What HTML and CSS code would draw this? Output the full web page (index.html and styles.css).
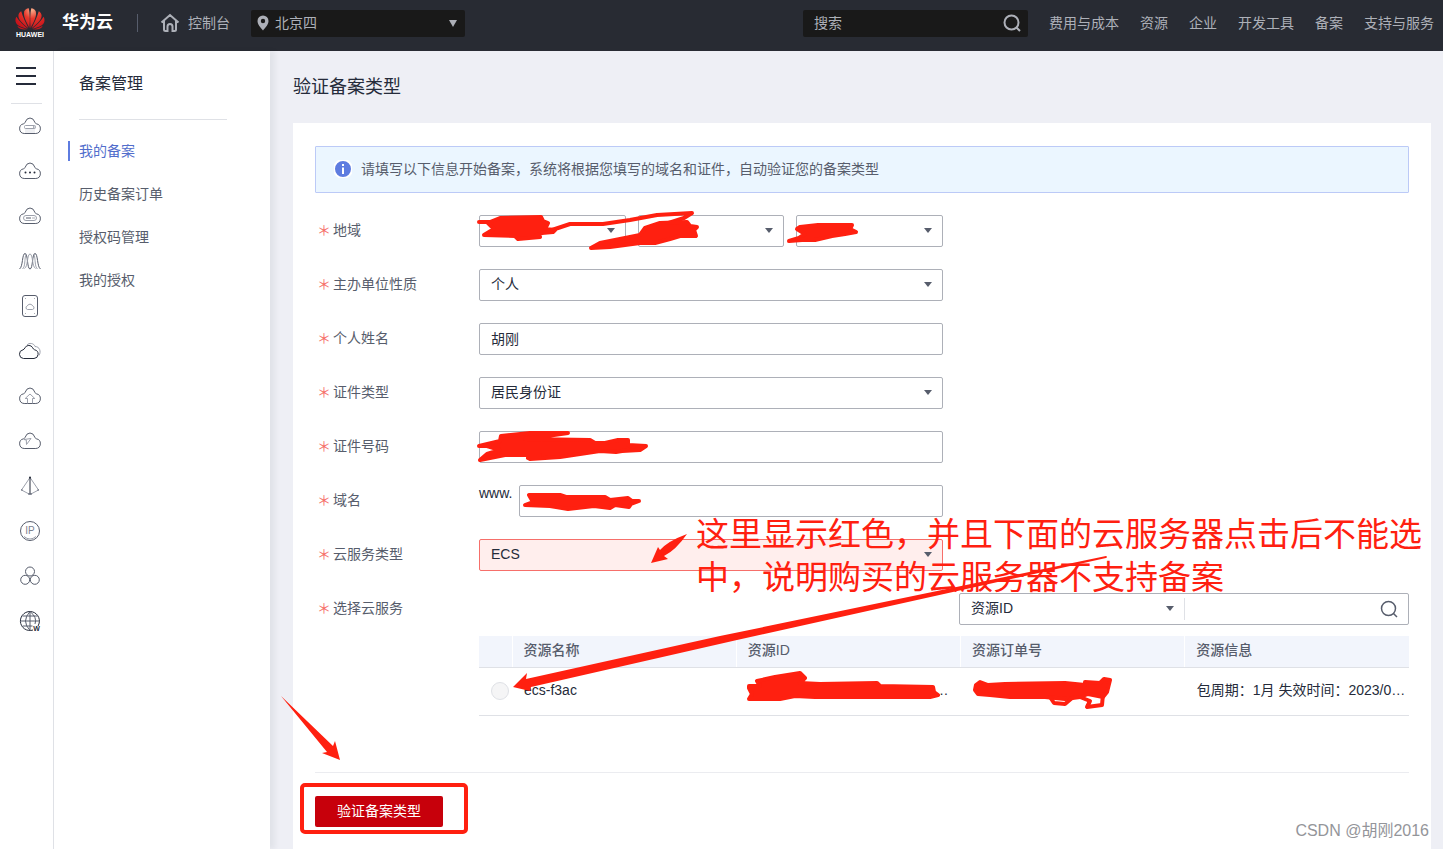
FILE: index.html
```html
<!DOCTYPE html>
<html lang="zh-CN">
<head>
<meta charset="utf-8">
<title>验证备案类型</title>
<link rel="stylesheet" href="styles.css">
</head>
<body>
<svg class="defs" aria-hidden="true">
  <symbol id="cloud" viewBox="0 0 24 24"><path d="M6.200 19.500A4.900 4.900 0 0 1 5.600 9.800Q6.500 9.600 7 8.500Q8.500 4 12 4T17 8.500Q17.500 9.600 18.400 9.800A4.900 4.900 0 0 1 17.800 19.500Z"/></symbol>
  <symbol id="search" viewBox="0 0 20 20"><circle cx="9.5" cy="9.5" r="7"/><path d="M14.500 14.500L18 18"/></symbol>
</svg>

<header class="topbar">
  <a class="logo" href="#" aria-label="HUAWEI">
    <svg class="logo-mark" viewBox="0 0 30 22">
      <defs><radialGradient id="petal" gradientUnits="userSpaceOnUse" cx="17" cy="2" r="19"><stop offset="0" stop-color="#f8b08c"/><stop offset=".45" stop-color="#e8382c"/><stop offset="1" stop-color="#c9141b"/></radialGradient></defs>
      <g fill="url(#petal)">
        <path d="M14.4 20C10.6 13 8.2 8 9.2 3.6C9.8 1.6 11.6.4 13.8.2C15 6 15 13 14.4 20Z"/>
        <path d="M15.6 20C19.4 13 21.8 8 20.8 3.6C20.2 1.6 18.4.4 16.2.2C15 6 15 13 15.6 20Z"/>
        <path d="M13.5 20.3C7 15.5 3.3 11.5 3.4 7.6C3.5 5.7 4.6 4 6.2 3.2C8 9.500 10.600 14.500 13.500 20.300Z"/>
        <path d="M16.5 20.3C23 15.500 26.700 11.500 26.600 7.600C26.500 5.700 25.400 4 23.800 3.200C22 9.500 19.400 14.500 16.500 20.300Z"/>
        <path d="M12.800 20.800C5.800 19 1.200 17 .6 13.400C.3 11.400.7 10 1.400 8.800C4.500 13.600 8.400 17.300 12.800 20.800Z"/>
        <path d="M17.200 20.800C24.200 19 28.800 17 29.400 13.400C29.700 11.400 29.300 10 28.600 8.800C25.500 13.600 21.600 17.300 17.200 20.800Z"/>
        <path d="M12.300 21.300C8 21.600 4.200 21.700 2.200 17.700C5.500 19.500 8.500 20.600 12.300 21.300Z"/>
        <path d="M17.700 21.300C22 21.600 25.800 21.700 27.800 17.700C24.500 19.500 21.500 20.600 17.700 21.300Z"/>
      </g>
    </svg>
    <span class="logo-text">HUAWEI</span>
  </a>
  <strong class="brand">华为云</strong>
  <a class="console" href="#">
    <svg class="home" viewBox="0 0 20 20"><path d="M1.500 9.500L10 2l8.500 7.500M4 7.500V16.500q0 1.500 1.500 1.500h2V13.500a2.500 2.500 0 0 1 5 0V18h2q1.500 0 1.500-1.500V7.500"/></svg>
    控制台
  </a>
  <div class="region select">
    <svg class="pin" viewBox="0 0 12 16"><path fill-rule="evenodd" d="M6 .5a5.500 5.500 0 0 1 5.500 5.500c0 3.500-3 6.500-5.500 9.500C3.500 12.500.5 9.500.5 6a5.500 5.500 0 0 1 5.500-5.500zm0 3.300a2.200 2.200 0 1 0 0 4.400a2.200 2.200 0 0 0 0-4.400z"/></svg>
    <select aria-label="区域"><option>北京四</option></select>
  </div>
  <div class="top-search">
    <input type="text" placeholder="搜索" aria-label="搜索">
    <button type="button" aria-label="搜索"><svg class="icon-search"><use href="#search"/></svg></button>
  </div>
  <nav class="top-nav">
    <a href="#">费用与成本</a><a href="#">资源</a><a href="#">企业</a><a href="#">开发工具</a><a href="#">备案</a><a href="#">支持与服务</a>
  </nav>
</header>

<div class="layout">
  <nav class="rail" aria-label="服务">
    <button class="menu" type="button" aria-label="菜单"><i></i><i></i><i></i></button>
    <div class="rail-icons">
      <a href="#" aria-label="弹性云服务器"><svg viewBox="0 0 24 24"><path class="shade" d="M7 14h10v5H7z"/><use href="#cloud"/><g class="faint"><rect x="6.500" y="11.500" width="11" height="3" rx="1"/><path class="dark" d="M15 13h1.500"/></g></svg></a>
      <a href="#" aria-label="云服务"><svg viewBox="0 0 24 24"><use href="#cloud"/><path class="dots" d="M7.500 13.500h0M12 13.500h0M16.500 13.500h0"/></svg></a>
      <a href="#" aria-label="云硬盘"><svg viewBox="0 0 24 24"><use href="#cloud"/><g class="faint"><rect x="5.500" y="11.500" width="13" height="5" rx="2.500"/><path class="dark" d="M8 14h5M14.500 14h1M16.500 14h.5"/></g></svg></a>
      <a href="#" aria-label="弹性伸缩"><svg viewBox="0 0 24 24"><path d="M1.500 20C5 18 4 4.500 7 4.500S9 20 12 20S14 4.500 17 4.500S19 18 22.500 20"/><path class="faint" d="M4.500 20C8 18 6 4.500 9 5.500M6.500 19.500C10 18 9 5 12 5S14 18 17.500 19.500M15 5.500C18 4.500 16 18 19.500 20"/></svg></a>
      <a href="#" aria-label="云存储"><svg viewBox="0 0 24 24"><rect x="4.500" y="1.500" width="15" height="21" rx="2.500"/><path d="M7 4.500h.5M16.500 4.500h.5M7 19.500h.5M16.500 19.500h.5"/><path class="faint" d="M9.500 15.500a1.800 1.800 0 0 1-.2-3.500a2.900 2.900 0 0 1 5.400 0a1.800 1.800 0 0 1-.2 3.500z"/></svg></a>
      <a href="#" aria-label="多云"><svg viewBox="0 0 24 24"><path class="faint" d="M9 6C11 3.500 16 4 17 7.500C21.500 7.500 23.500 12.500 21 16.500"/><path class="strong" d="M5.500 19.500A4.400 4.400 0 0 1 5 10.800Q6.300 10.300 7 8.800A4.300 4.300 0 0 1 14.700 8.800Q15.300 10.300 16.600 10.800A4.400 4.400 0 0 1 16 19.500Z"/></svg></a>
      <a href="#" aria-label="云备份"><svg viewBox="0 0 24 24"><use href="#cloud"/><path class="faint" d="M9.500 19.500V14.500H7.200L12 10L16.800 14.500H14.500V19.500"/></svg></a>
      <a href="#" aria-label="云加速"><svg viewBox="0 0 24 24"><use href="#cloud"/><path class="faint" d="M6 10.500L13 9.500L8.500 15.500L8.300 11Z"/></svg></a>
      <a href="#" aria-label="数据"><svg viewBox="0 0 24 24"><path class="faint" d="M12 3.500L3.500 16L12 20.500L20.500 16Z"/><path class="strong" d="M12 3v17"/><path class="dots" d="M12 3.500h0"/><path d="M3 16h1.500M19.500 16H21M10 20h4"/></svg></a>
      <a href="#" aria-label="弹性公网IP"><svg viewBox="0 0 24 24"><circle cx="12" cy="12" r="9.500"/><path class="faint" d="M6 17.500Q12 22.500 18 17.500"/><text x="12" y="15">IP</text></svg></a>
      <a href="#" aria-label="容器"><svg viewBox="0 0 24 24"><circle cx="12" cy="7.500" r="4.500"/><circle cx="7.200" cy="15.800" r="4.500"/><circle cx="16.800" cy="15.800" r="4.500"/></svg></a>
      <a href="#" aria-label="域名"><svg viewBox="0 0 24 24"><path class="strong" d="M20 17A9.500 9.500 0 1 0 15 21"/><path d="M12 2.500v19M2.500 12h19M4.500 7h15M4.500 17h10M12 2.500Q3 12 12 21.500M12 2.500Q19.500 8.500 17 15"/><text class="w" x="18.500" y="22">W</text></svg></a>
    </div>
  </nav>

  <aside class="side">
    <h2>备案管理</h2>
    <a class="active" href="#">我的备案</a>
    <a href="#">历史备案订单</a>
    <a href="#">授权码管理</a>
    <a href="#">我的授权</a>
  </aside>

  <main class="main">
    <h1>验证备案类型</h1>
    <form class="panel">
      <div class="alert">
        <svg viewBox="0 0 18 18"><circle cx="9" cy="9" r="9"/><path d="M9 7.500v6.500M9 4v2"/></svg>
        <span>请填写以下信息开始备案，系统将根据您填写的域名和证件，自动验证您的备案类型</span>
      </div>
      <div class="row">
        <label for="province">地域</label>
        <div class="control triple">
          <div class="select"><select id="province"><option></option></select></div>
          <div class="select"><select aria-label="城市"><option></option></select></div>
          <div class="select"><select aria-label="区县"><option></option></select></div>
        </div>
      </div>
      <div class="row">
        <label for="nature">主办单位性质</label>
        <div class="control select"><select id="nature"><option>个人</option></select></div>
      </div>
      <div class="row">
        <label for="name">个人姓名</label>
        <div class="control"><input id="name" type="text" value="胡刚"></div>
      </div>
      <div class="row">
        <label for="id-type">证件类型</label>
        <div class="control select"><select id="id-type"><option>居民身份证</option></select></div>
      </div>
      <div class="row">
        <label for="id-no">证件号码</label>
        <div class="control"><input id="id-no" type="text"></div>
      </div>
      <div class="row">
        <label for="domain">域名</label>
        <div class="control domain"><span>www.</span><input id="domain" type="text"></div>
      </div>
      <div class="row">
        <label for="service">云服务类型</label>
        <div class="control select error"><select id="service"><option>ECS</option></select></div>
      </div>
      <div class="row">
        <label for="filter">选择云服务</label>
        <div class="resources">
          <div class="filter">
            <div class="select"><select id="filter"><option>资源ID</option></select></div>
            <div class="query">
              <input type="text" aria-label="资源搜索">
              <button type="button" aria-label="搜索资源"><svg class="icon-search"><use href="#search"/></svg></button>
            </div>
          </div>
          <table>
            <colgroup><col class="pick"><col><col><col></colgroup>
            <thead><tr><th></th><th>资源名称</th><th>资源ID</th><th>资源订单号</th><th>资源信息</th></tr></thead>
            <tbody><tr><td class="pick-cell"><input type="radio" name="resource" aria-label="ecs-f3ac" disabled></td><td>ecs-f3ac</td><td class="clipped">…</td><td></td><td>包周期：1月 失效时间：2023/0…</td></tr></tbody>
          </table>
        </div>
      </div>
      <div class="actions"><button class="submit" type="button">验证备案类型</button></div>
    </form>
  </main>
</div>

<div class="annotations">
  <svg class="ink" viewBox="0 0 1443 849">
    <g class="scribble">
      <path d="M479 222H490L500 218L541 217L543 221L548 223L545 229L555 230L553 232L542 233L536 235L540 237L518 239L515 236L484 235L494 229L487 222Z"/>
      <path class="line" d="M546 232L570 224H603L630 220L657 215L692 213L684 218L650 229"/>
      <path d="M645 228L660 223L687 222L690 226L697 227L694 230L696 236H680L670 239L655 243H640L610 247L591 248L600 243L640 235Z"/>
      <path d="M789 241L799 238L805 234L797 229L800 227L818 225H852L850 229L856 232L845 234L832 236L815 240H802Z"/>
      <path d="M479 446L500 441L501 436L530 433H568L540 437L525 439L590 440L595 443H605L618 440H628V445L646 446L640 450L622 451L616 452L600 451L580 454L560 457L530 459L528 458L540 455H505L480 460L487 454L500 450L487 446Z"/>
      <path d="M529 495H560L566 497H605L610 500L628 498L632 501H639L631 504L629 507L615 505L610 508L594 506L568 509L550 506L525 505L533 502Z"/>
      <path d="M749 686H760L757 681L775 677L800 673L805 678L800 683L820 684L877 683L880 686L933 687L934 692L938 695L930 697H815L795 696L780 699H749L752 694L749 688Z"/>
      <path d="M975 690L976 685L980 682L988 685L1005 684L1065 683L1085 685V682L1100 683L1104 679L1110 680L1107 692L1103 697L1088 694L1080 697L1065 699L1045 697H1010L990 695L978 694Z"/>
      <path class="line" d="M1050 697L1054 703L1065 704L1072 698M1080 697L1090 701L1087 707L1102 705L1103 694"/>
    </g>
    <path d="M513 687L527 673L526 679L720 636L1106 556Q1108 557 1106 558L737 640L531 687L530 691Z"/>
    <path d="M687 534Q668 541 660 550L658 547L651 563L668 559L664 556Q676 550 687 534Z"/>
    <path d="M281 696L333 746L335 741L340 760L322 753L327 752Z"/>
    <rect class="frame" x="302" y="785" width="164" height="47" rx="3"/>
  </svg>
  <p class="note">这里显示红色，并且下面的云服务器点击后不能选<br>中，说明购买的云服务器不支持备案</p>
  <span class="watermark">CSDN @胡刚2016</span>
</div>
</body>
</html>
```
FILE: styles.css
```css
* { box-sizing: border-box; }
body {
  margin: 0;
  min-height: 100vh;
  display: flex;
  flex-direction: column;
  position: relative;
  background: #eeeff5;
  color: #575d6c;
  font: 14px/20px "Liberation Sans", "Noto Sans CJK SC", sans-serif;
}
a { color: inherit; text-decoration: none; }
button, input, select { font: inherit; color: #252b3a; margin: 0; }
button { border: 0; background: none; padding: 0; }
.defs { position: absolute; width: 0; height: 0; }

/* top bar */
.topbar {
  flex: none;
  display: flex;
  align-items: center;
  height: 51px;
  padding: 0 9px 5px 15px;
  background: #282b33;
  color: #adb0b8;
}
.logo { width: 30px; display: flex; flex-direction: column; align-items: center; padding-top: 2px; }
.logo-mark { width: 30px; height: 22px; }
.logo-text { color: #fff; font-size: 7px; line-height: 10px; font-weight: 700; }
.brand {
  color: #fff;
  font-size: 17px;
  margin-left: 17px;
  padding-right: 24px;
  border-right: 1px solid #575d6c;
  line-height: 18px;
}
.console { display: flex; align-items: center; gap: 8px; margin-left: 22px; }
.home { width: 20px; height: 20px; fill: none; stroke: #adb0b8; stroke-width: 2; }
.select { position: relative; display: flex; }
.select::after {
  content: "";
  position: absolute;
  right: 11px;
  top: calc(50% - 3px);
  border: 4px solid transparent;
  border-top: 5px solid #575d6c;
  border-bottom: 0;
  pointer-events: none;
}
.select select { appearance: none; flex: 1; min-width: 0; }
.region {
  align-items: center;
  width: 214px;
  height: 27px;
  margin-left: 21px;
  padding-left: 6px;
  border-radius: 2px;
  background: #191919;
}
.region::after { right: 8px; border-width: 7px 4px 0; border-top-color: #adb0b8; }
.region select { border: 0; background: none; color: #adb0b8; padding: 0 20px 0 6px; }
.pin { width: 12px; height: 16px; fill: #adb0b8; }
.top-search {
  display: flex;
  align-items: center;
  width: 225px;
  height: 27px;
  margin-left: auto;
  padding: 0 6px 0 11px;
  border-radius: 2px;
  background: #191919;
}
.top-search input { flex: 1; min-width: 0; border: 0; padding: 0; background: none; color: #adb0b8; }
.top-search input::placeholder { color: #adb0b8; }
.icon-search { display: block; width: 20px; height: 20px; fill: none; stroke: #575d6c; stroke-width: 1.5; }
.top-search .icon-search { stroke: #adb0b8; stroke-width: 2; }
.top-nav { display: flex; gap: 21px; margin-left: 21px; white-space: nowrap; }

/* page frame */
.layout { flex: 1; display: flex; }
.rail { flex: none; width: 54px; background: #fff; border-right: 1px solid #dfe1e6; }
.menu {
  display: flex;
  flex-direction: column;
  gap: 6px;
  width: 31px;
  margin-left: 11px;
  padding: 16px 6px 18px 5px;
  border-bottom: 1px solid #dfe1e6;
}
.menu i { display: block; width: 20px; height: 2px; background: #252b3a; }
.rail-icons { display: flex; flex-direction: column; gap: 21px; padding: 10px 0 0 18px; }
.rail-icons a, .rail-icons svg { display: block; width: 24px; height: 24px; }
.rail-icons svg { fill: none; stroke: #575d6c; stroke-width: 1; }
.rail-icons .faint { stroke: #9da1ac; }
.rail-icons .dark { stroke: #575d6c; }
.rail-icons .strong { stroke: #252b3a; }
.rail-icons .shade { fill: #eeeff2; stroke: none; }
.rail-icons .dots { stroke: #252b3a; stroke-width: 2; stroke-linecap: round; }
.rail-icons text { fill: #7c818e; stroke: none; font-size: 10px; text-anchor: middle; }
.rail-icons .w { fill: #252b3a; font-size: 7px; font-weight: 700; }

.side {
  flex: none;
  display: flex;
  flex-direction: column;
  gap: 23px;
  width: 216px;
  padding: 21px 43px 0 25px;
  background: #fff;
  box-shadow: 5px 0 5px rgba(40, 43, 51, .06);
}
.side h2 {
  margin: 0 0 -2px;
  padding-bottom: 23px;
  border-bottom: 1px solid #dfe1e6;
  color: #252b3a;
  font-size: 16px;
  font-weight: 400;
  line-height: 24px;
}
.side .active { color: #526ecc; border-left: 2px solid #5e7ce0; margin-left: -11px; padding-left: 9px; }

.main { flex: 1; min-width: 0; display: flex; flex-direction: column; padding: 22px 12px 0 23px; }
.main h1 { margin: 0 0 22px; color: #252b3a; font-size: 18px; font-weight: 400; line-height: 28px; }

/* form */
.panel { flex: 1; padding: 23px 22px 22px; background: #fff; }
.alert {
  display: flex;
  align-items: center;
  gap: 9px;
  min-height: 47px;
  margin-bottom: 22px;
  padding: 0 18px 2px;
  border: 1px solid #bccaf7;
  border-radius: 1px;
  background: #ebf6ff;
}
.alert svg { width: 18px; height: 18px; fill: #5e7ce0; stroke: #fff; stroke-width: 2; }
.row { display: flex; margin-bottom: 22px; }
.row > label { flex: none; width: 164px; padding: 5px 0 7px 2px; }
.row > label::before { content: "＊"; margin-right: 2px; color: #f66f6a; }
.control { display: flex; width: 464px; }
.control input, .control select {
  flex: 1;
  min-width: 0;
  width: 100%;
  height: 32px;
  padding: 0 11px 2px;
  border: 1px solid #adb0b8;
  border-radius: 2px;
  background: #fff;
}
.triple { gap: 12px; }
.triple .select { flex: 1; }
.domain { gap: 8px; }
.domain span { width: 32px; color: #252b3a; line-height: 16px; }
.control.error select { border-color: #f66f6a; background: #ffeeed; }

.resources { flex: 1; min-width: 0; }
.filter {
  display: flex;
  align-items: center;
  width: 450px;
  height: 32px;
  margin: 0 0 11px auto;
  border: 1px solid #adb0b8;
  border-radius: 2px;
}
.filter .select { flex: 1; border-right: 1px solid #dfe1e6; }
.filter .select::after { right: 10px; }
.filter select, .filter input { border: 0; padding: 0 11px 2px; background: none; }
.query { display: flex; align-items: center; width: 223px; padding-right: 9px; }
.query input { flex: 1; min-width: 0; }
table { width: 100%; table-layout: fixed; border-collapse: collapse; color: #252b3a; }
.pick { width: 33px; }
th { height: 31px; padding: 0 0 3px 11px; background: #f2f5fc; border-bottom: 1px solid #dfe1e6; color: #575d6c; font-weight: 500; text-align: left; }
th + th { border-left: 1px solid #fff; }
td { height: 48px; padding: 0 0 3px 12px; border-bottom: 1px solid #dfe1e6; white-space: nowrap; }
td.pick-cell { padding-bottom: 0; }
td.clipped { padding-right: 12px; text-align: right; }
td input { appearance: none; display: block; width: 18px; height: 18px; border: 1px solid #dfe1e6; border-radius: 50%; background: #f5f5f6; }
.actions { margin-top: 56px; padding-top: 23px; border-top: 1px solid #ebecf0; }
.row:has(.resources) { margin-bottom: 0; }
.submit { width: 128px; height: 31px; padding-bottom: 1px; border-radius: 2px; background: #c7000b; color: #fff; }

/* hand-drawn markup over the page */
.annotations { position: absolute; inset: 0; overflow: hidden; pointer-events: none; }
.ink { position: absolute; left: 0; top: 0; width: 1443px; height: 849px; fill: #ff2010; }
.scribble { stroke: #ff2010; stroke-width: 4; stroke-linejoin: round; stroke-linecap: round; }
.scribble .line { fill: none; }
.frame { fill: none; stroke: #ff2010; stroke-width: 4; }
.note { position: absolute; left: 696px; top: 513px; margin: 0; color: #ff2010; font-size: 33px; line-height: 43px; white-space: nowrap; }
.watermark { position: absolute; right: 14px; bottom: 8px; color: #94959a; font-size: 16px; }
```
